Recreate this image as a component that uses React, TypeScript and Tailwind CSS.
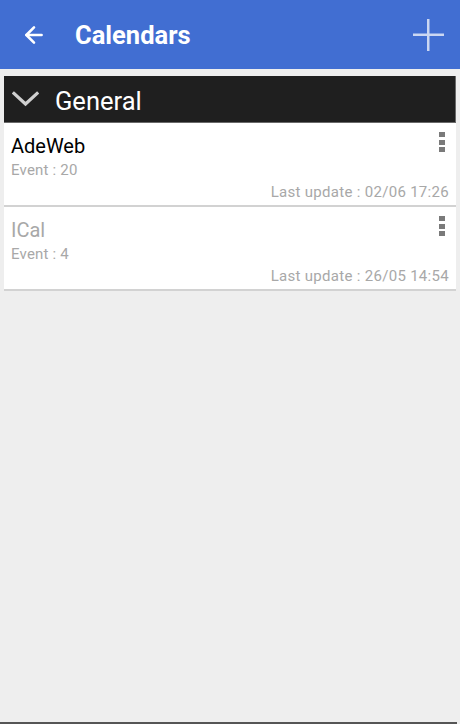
import { ArrowLeft } from "lucide-react";

type Calendar = {
  name: string;
  events: number;
  updated: string;
  active: boolean;
};

const calendars: Calendar[] = [
  { name: "AdeWeb", events: 20, updated: "02/06 17:26", active: true },
  { name: "ICal", events: 4, updated: "26/05 14:54", active: false },
];

function Kebab() {
  return (
    <div className="-mt-[2px] flex flex-col gap-[2.5px]">
      <span className="block h-[5px] w-[6px] bg-[#7a7a7a]" />
      <span className="block h-[5px] w-[6px] bg-[#7a7a7a]" />
      <span className="block h-[5px] w-[6px] bg-[#7a7a7a]" />
    </div>
  );
}

function CalendarRow({ cal }: { cal: Calendar }) {
  return (
    <div className="border-b-2 border-[#d2d2d2] bg-white pl-[7px] pr-[7px] pt-[11px] pb-[3px]">
      <div className="flex items-start justify-between">
        <div
          className={
            cal.active
              ? "text-[20px] leading-[24px] text-black"
              : "text-[20px] leading-[24px] text-[#a8a8a8]"
          }
        >
          {cal.name}
        </div>
        <div className="pr-[4px]">
          <Kebab />
        </div>
      </div>
      <div className="mt-[2px] text-[15px] leading-[20px] tracking-[0.2px] text-[#a8a8a8]">
        Event : {cal.events}
      </div>
      <div className="mt-[2px] text-right text-[15px] leading-[20px] tracking-[0.3px] text-[#a8a8a8]">
        Last update : {cal.updated}
      </div>
    </div>
  );
}

export default function App() {
  return (
    <div
      className="flex h-[724px] w-[460px] flex-col overflow-hidden bg-[#eeeeee]"
      style={{ fontFamily: "Roboto, 'Noto Sans', sans-serif" }}
    >
      <header className="flex h-[69px] shrink-0 items-center bg-[#416ed2] pl-[21px] pr-[15px]">
        <ArrowLeft className="h-[26px] w-[26px] text-white" strokeWidth={2.4} />
        <h1 className="ml-[28px] mt-[2px] flex-1 text-[25.5px] font-bold leading-none text-white">
          Calendars
        </h1>
        <svg width="32" height="32" viewBox="0 0 32 32" className="opacity-80">
          <rect x="14" y="0" width="2.5" height="32" fill="#eef2fb" />
          <rect x="0" y="14.5" width="31" height="2.5" fill="#eef2fb" />
        </svg>
      </header>

      <div className="flex-1 px-[4px] pt-[7px]">
        <div className="flex h-[47px] items-center border-b border-r border-[#6a6a6a] bg-[#1f1f1f] pl-[8px]">
          <svg width="27" height="16" viewBox="0 0 27 16" fill="none">
            <polyline
              points="2,2.5 13.5,13 25,2.5"
              stroke="#cfcfcf"
              strokeWidth="3.2"
              strokeLinecap="square"
            />
          </svg>
          <span className="ml-[16px] mt-[5px] text-[25.5px] leading-none text-white">General</span>
        </div>
        {calendars.map((cal) => (
          <CalendarRow key={cal.name} cal={cal} />
        ))}
      </div>

      <div className="h-[2px] w-[457px] shrink-0 bg-[#555555]" />
    </div>
  );
}
